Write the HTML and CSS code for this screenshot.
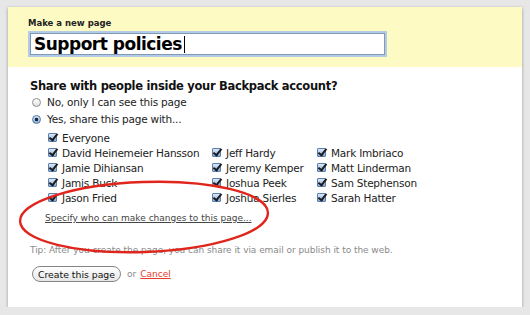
FILE: index.html
```html
<!DOCTYPE html>
<html lang="en">
<head>
    <meta charset="UTF-8">
    <meta name="viewport" content="width=device-width, initial-scale=1.0">
    <link rel="stylesheet" href="styles.css">
    <title>Make a new page</title>
</head>
<body>
    <div class="panel">

        <div class="panel-head">
            <div class="label">Make a new page</div>
            <div class="title-field"><span>Support policies</span><span class="caret"></span></div>
        </div>

        <div class="panel-body">
            <h2>Share with people inside your Backpack account?</h2>

            <div class="option"><span class="radio"></span>No, only I can see this page</div>
            <div class="option"><span class="radio on"></span>Yes, share this page with...</div>

            <div class="people">
                <div class="person"><span class="check"></span>Everyone</div>
                <div class="people-grid">
                    <div class="person"><span class="check"></span>David Heinemeier Hansson</div>
                    <div class="person"><span class="check"></span>Jamie Dihiansan</div>
                    <div class="person"><span class="check"></span>Jamis Buck</div>
                    <div class="person"><span class="check"></span>Jason Fried</div>
                    <div class="person"><span class="check"></span>Jeff Hardy</div>
                    <div class="person"><span class="check"></span>Jeremy Kemper</div>
                    <div class="person"><span class="check"></span>Joshua Peek</div>
                    <div class="person"><span class="check"></span>Joshua Sierles</div>
                    <div class="person"><span class="check"></span>Mark Imbriaco</div>
                    <div class="person"><span class="check"></span>Matt Linderman</div>
                    <div class="person"><span class="check"></span>Sam Stephenson</div>
                    <div class="person"><span class="check"></span>Sarah Hatter</div>
                </div>
            </div>

            <a href="#" class="specify">Specify who can make changes to this page...</a>

            <p class="tip">Tip: After you create the page, you can share it via email or publish it to the web.</p>

            <div class="actions">
                <button class="create">Create this page</button>
                <span class="or">or</span>
                <a href="#" class="cancel">Cancel</a>
            </div>
        </div>

        <!-- red marker circle drawn over the form -->
        <svg class="scribble" width="514" height="300" viewBox="0 0 514 300">
            <ellipse cx="136" cy="210" rx="124" ry="35" transform="rotate(-2 136 210)"
                     fill="none" stroke="#e0261c" stroke-width="2.4"/>
        </svg>
    </div>
</body>
</html>
```

FILE: styles.css
```css
*{
    margin: 0;
    padding: 0;
    box-sizing: border-box;
    font-family: "DejaVu Sans", Verdana, sans-serif;
}

body{
    background: #e7e7e7;
    color: #222;
}

.panel{
    position: relative;
    width: 514px;
    height: 300px;
    margin: 7px 0 0 8px;
    background: #fff;
    box-shadow: 0 1px 3px rgba(0, 0, 0, 0.35);
}

.panel-head{
    height: 60px;
    padding: 11px 0 0 20px;
    background: #fdfac3;
}

.label{
    font-size: 8.5px;
    font-weight: bold;
    line-height: 11px;
    color: #222;
}

.title-field{
    display: flex;
    align-items: center;
    width: 355px;
    height: 22px;
    margin: 4px 0 0 2px;
    padding-left: 3px;
    background: #fff;
    border: 1px solid #7d99bb;
    box-shadow: 0 0 0 2px #b3cbe4;
    font-size: 17px;
    font-weight: bold;
    letter-spacing: -0.5px;
    line-height: 20px;
    color: #000;
}

.caret{
    width: 1px;
    height: 17px;
    margin-left: 2px;
    background: #000;
}

.panel-body{
    padding: 11px 0 0 22px;
}

h2{
    font-size: 11.5px;
    font-weight: bold;
    letter-spacing: -0.3px;
    line-height: 16px;
    color: #111;
}

.option{
    display: flex;
    align-items: center;
    gap: 6px;
    padding-left: 2px;
    font-size: 10.5px;
    letter-spacing: -0.22px;
    line-height: 17px;
}

.radio{
    width: 9px;
    height: 9px;
    border: 1px solid #8e8e8e;
    border-radius: 50%;
    background: linear-gradient(#fff, #e0e0e0);
}

.radio.on{
    border-color: #56789f;
    background: radial-gradient(circle, #1c2a40 0 1.6px, transparent 2.1px), linear-gradient(#d6e5f6, #8cafdb);
}

.people{
    margin-top: 2px;
    padding-left: 18px;
}

.people-grid{
    display: grid;
    grid-template-columns: 164px 105px auto;
    grid-template-rows: repeat(4, 15px);
    grid-auto-flow: column;
}

.person{
    display: flex;
    align-items: center;
    gap: 5px;
    height: 15px;
    font-size: 10.5px;
    letter-spacing: -0.22px;
    white-space: nowrap;
}

.check{
    position: relative;
    flex: none;
    width: 9px;
    height: 9px;
    border: 1px solid #5a7ead;
    border-radius: 1px;
    background: linear-gradient(#dde9f8, #86abda);
}

.check::after{
    content: "";
    position: absolute;
    left: 2px;
    top: -2px;
    width: 3px;
    height: 7px;
    border: solid #1b1b1b;
    border-width: 0 2px 2px 0;
    transform: rotate(38deg);
}

.specify{
    display: block;
    margin: 6px 0 0 15px;
    font-size: 9px;
    line-height: 14px;
    color: #444;
}

.tip{
    margin-top: 18px;
    font-size: 9px;
    letter-spacing: -0.05px;
    line-height: 14px;
    color: #8a8a8a;
}

.actions{
    display: flex;
    align-items: center;
    margin-top: 9px;
    padding-left: 2px;
    font-size: 9px;
}

.create{
    height: 16px;
    padding: 0 5px;
    border: 1px solid #858585;
    border-radius: 8px;
    background: linear-gradient(#fff, #e6e6e6);
    font-size: 9.3px;
    color: #111;
}

.or{
    margin-left: 6px;
    color: #888;
}

.cancel{
    margin-left: 4px;
    color: #e3402c;
}

.scribble{
    position: absolute;
    left: 0;
    top: 0;
    pointer-events: none;
}
```
